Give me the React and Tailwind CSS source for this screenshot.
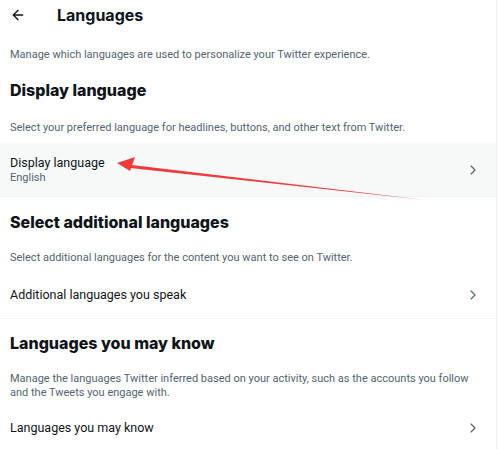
import { ArrowLeft, ChevronRight } from "lucide-react";

function SectionHeading({ children, pt, pb }) {
  return (
    <h2
      className={`px-[10px] ${pt} ${pb} text-[16px] font-extrabold leading-[22px] text-[#0f1419]`}
      style={{ fontFamily: "Inter, 'Liberation Sans', sans-serif" }}
    >
      {children}
    </h2>
  );
}

function SectionText({ children, pb }) {
  return (
    <p className={`px-[10px] ${pb} text-[11px] leading-[14px] text-[#536471]`}>
      {children}
    </p>
  );
}

function Row({ title, sub, active }) {
  return (
    <div
      className={`flex items-center justify-between pl-[10px] pr-[15px] ${
        sub ? "h-[53px]" : "h-[46px]"
      } ${active ? "bg-[#f7f9f9]" : ""}`}
    >
      <div>
        <div className="text-[12.5px] leading-[16px] text-[#0f1419]">{title}</div>
        {sub && (
          <div className="text-[11px] leading-[14px] text-[#536471]">{sub}</div>
        )}
      </div>
      <ChevronRight className="h-[16px] w-[16px] text-[#536471]" strokeWidth={1.75} />
    </div>
  );
}

export default function App() {
  return (
    <div
      className="relative h-[449px] w-[500px] overflow-hidden bg-white"
      style={{ fontFamily: "Roboto, 'Liberation Sans', sans-serif" }}
    >
      <div className="h-full w-[497px] border-r border-[#eff3f4]">
        <div className="flex h-[30px] items-center px-[10px]">
          <ArrowLeft className="h-[16px] w-[16px] text-[#0f1419]" strokeWidth={2} />
          <h1
            className="ml-[31px] text-[16px] font-bold text-[#0f1419]"
            style={{ fontFamily: "Inter, 'Liberation Sans', sans-serif" }}
          >
            Languages
          </h1>
        </div>
        <SectionText pb="pb-[10px]">
          <span className="block pt-[18px]">
            Manage which languages are used to personalize your Twitter experience.
          </span>
        </SectionText>

        <SectionHeading pt="pt-[7px]" pb="pb-[20px]">
          Display language
        </SectionHeading>
        <SectionText pb="pb-[8px]">
          Select your preferred language for headlines, buttons, and other text from Twitter.
        </SectionText>
        <Row title="Display language" sub="English" active />
        <div className="border-t border-[#eff3f4]" />

        <SectionHeading pt="pt-[14px]" pb="pb-[18px]">
          Select additional languages
        </SectionHeading>
        <SectionText pb="pb-[7px]">
          Select additional languages for the content you want to see on Twitter.
        </SectionText>
        <Row title="Additional languages you speak" />
        <div className="border-t border-[#eff3f4]" />

        <SectionHeading pt="pt-[13px]" pb="pb-[18px]">
          Languages you may know
        </SectionHeading>
        <SectionText pb="pb-[5px]">
          Manage the languages Twitter inferred based on your activity, such as the accounts you follow and the Tweets you engage with.
        </SectionText>
        <Row title="Languages you may know" />
      </div>

      {/* annotation arrow */}
      <svg
        className="absolute left-0 top-0"
        width="500"
        height="449"
        viewBox="0 0 500 449"
      >
        <polygon points="425,200 132,165 130,168" fill="#ef3b3b" />
        <polygon points="117,163 135,157 130,171" fill="#ef3b3b" />
      </svg>
    </div>
  );
}
